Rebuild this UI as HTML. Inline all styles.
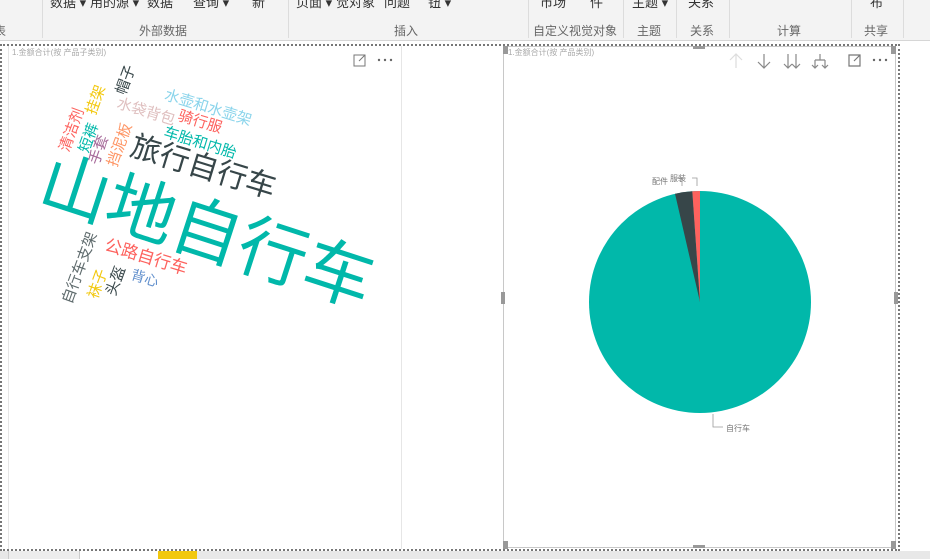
<!DOCTYPE html>
<html><head><meta charset="utf-8"><style>
*{margin:0;padding:0;box-sizing:border-box}
body{width:930px;height:559px;overflow:hidden;background:#fff;position:relative;font-family:"Liberation Sans","Noto Sans CJK SC",sans-serif}
.rib{position:absolute;left:0;top:0;width:930px;height:41px;background:#f3f3f3;border-bottom:1px solid #d6d6d6}
.t{position:absolute;top:-8px;font-size:13px;color:#333;white-space:nowrap}
.g{position:absolute;top:22px;font-size:12px;color:#666;white-space:nowrap}
.sep{position:absolute;top:0;width:1px;height:38px;background:#dcdcdc}
.w{position:absolute;white-space:nowrap;transform:translate(-50%,-50%);line-height:1}
.ttl{position:absolute;font-size:8px;color:#aaa;white-space:nowrap}
</style></head><body>
<div class="rib">
<span class="t" style="left:50px">数据 ▾</span><span class="t" style="left:90px">用的源 ▾</span><span class="t" style="left:147px">数据</span><span class="t" style="left:193px">查询 ▾</span><span class="t" style="left:252px">新</span>
<span class="t" style="left:296px">页面 ▾</span><span class="t" style="left:336px">觉对象</span><span class="t" style="left:384px">问题</span><span class="t" style="left:428px">钮 ▾</span>
<span class="t" style="left:540px">市场</span><span class="t" style="left:590px">件</span><span class="t" style="left:632px">主题 ▾</span><span class="t" style="left:688px">关系</span><span class="t" style="left:870px">布</span>
<span class="g" style="left:-6px">表</span>
<span class="g" style="left:139px">外部数据</span><span class="g" style="left:394px">插入</span><span class="g" style="left:533px">自定义视觉对象</span><span class="g" style="left:637px">主题</span><span class="g" style="left:690px">关系</span><span class="g" style="left:777px">计算</span><span class="g" style="left:864px">共享</span>
<div class="sep" style="left:42px"></div><div class="sep" style="left:288px"></div><div class="sep" style="left:528px"></div><div class="sep" style="left:623px"></div><div class="sep" style="left:676px"></div><div class="sep" style="left:729px"></div><div class="sep" style="left:851px"></div><div class="sep" style="left:903px"></div>
</div>
<div style="position:absolute;left:0;top:44px;width:900px;height:507px;border:2px dotted #777"></div>
<div style="position:absolute;left:401px;top:46px;width:1px;height:503px;background:#e6e6e6"></div>
<div style="position:absolute;left:8px;top:46px;width:1px;height:503px;background:#e6e6e6"></div>
<div style="position:absolute;left:503px;top:46px;width:393px;height:502px;border:1px solid #c8c8c8"></div>
<div style="position:absolute;left:503px;top:46px;width:5px;height:8px;background:#999"></div>
<div style="position:absolute;left:693px;top:46px;width:12px;height:3px;background:#999"></div>
<div style="position:absolute;left:891px;top:46px;width:5px;height:8px;background:#999"></div>
<div style="position:absolute;left:503px;top:541px;width:5px;height:8px;background:#999"></div>
<div style="position:absolute;left:693px;top:545px;width:12px;height:3px;background:#999"></div>
<div style="position:absolute;left:891px;top:541px;width:5px;height:8px;background:#999"></div>
<div style="position:absolute;left:501px;top:292px;width:4px;height:12px;background:#999"></div>
<div style="position:absolute;left:894px;top:292px;width:4px;height:12px;background:#999"></div>
<div style="position:absolute;left:0;top:551px;width:930px;height:8px;background:#e8e8e8"></div>
<div style="position:absolute;left:8px;top:551px;width:72px;height:8px;background:#ededed;border-left:1px solid #ccc;border-right:1px solid #ccc"></div>
<div style="position:absolute;left:80px;top:551px;width:78px;height:8px;background:#fff"></div>
<div style="position:absolute;left:158px;top:551px;width:39px;height:8px;background:#f2c80f"></div>
<span class="ttl" style="left:12px;top:47px">1.金额合计(按 产品子类别)</span>
<span class="ttl" style="left:508px;top:47px">1.金额合计(按 产品类别)</span>
<svg style="position:absolute;left:350px;top:52px" width="50" height="16"><g stroke="#777" fill="none" stroke-width="1"><path d="M4 3h11v11H4z M9 9l6-6 M11 3h4v4"/></g><g fill="#666"><circle cx="29" cy="8" r="1.2"/><circle cx="35" cy="8" r="1.2"/><circle cx="41" cy="8" r="1.2"/></g></svg>
<svg style="position:absolute;left:725px;top:52px" width="170" height="18"><g fill="none" stroke-width="1.2"><path d="M11 2v14 M5 8l6-6 6 6" stroke="#ddd"/><path d="M39 2v14 M33 10l6 6 6-6" stroke="#888"/><path d="M63 2v14 M71 2v14 M59 12l4 4 4-4 M67 12l4 4 4-4" stroke="#888"/><path d="M95 2v6 M90 8h10 M90 8v8 M100 8v8 M87 13l3 3 3-3 M97 13l3 3 3-3" stroke="#888"/><path d="M124 3h11v11h-11z M129 9l6-6 M131 3h4v4" stroke="#777"/></g><g fill="#666"><circle cx="149" cy="8" r="1.2"/><circle cx="155" cy="8" r="1.2"/><circle cx="161" cy="8" r="1.2"/></g></svg>
<svg style="position:absolute;left:0;top:0" width="930" height="559">
<circle cx="700" cy="302" r="111" fill="#01b8aa"/>
<path d="M700 302 L675 193.8 A111 111 0 0 1 692.3 191.3 Z" fill="#374649"/>
<path d="M700 302 L692.3 191.3 A111 111 0 0 1 700 191 Z" fill="#fd625e"/>
<path d="M682 186 v-8 h-6 M697 186 v-8 h-5" stroke="#999" fill="none" stroke-width="0.8"/>
<path d="M713 414 v13 h10" stroke="#999" fill="none" stroke-width="0.8"/>
<text x="652" y="184" font-size="8" fill="#777" font-family="Liberation Sans,Noto Sans CJK SC,sans-serif">配件</text>
<text x="670" y="181" font-size="8" fill="#777" font-family="Liberation Sans,Noto Sans CJK SC,sans-serif">服装</text>
<text x="726" y="431" font-size="8" fill="#777" font-family="Liberation Sans,Noto Sans CJK SC,sans-serif">自行车</text>
</svg>
<span class="w" style="left:207px;top:232px;font-size:69px;color:#01b8aa;transform:translate(-50%,-50%) rotate(18deg)">山地自行车</span>
<span class="w" style="left:203px;top:168px;font-size:30px;color:#374649;transform:translate(-50%,-50%) rotate(17deg)">旅行自行车</span>
<span class="w" style="left:146px;top:257px;font-size:17px;color:#fd625e;transform:translate(-50%,-50%) rotate(17deg)">公路自行车</span>
<span class="w" style="left:200px;top:143px;font-size:15px;color:#01b8aa;transform:translate(-50%,-50%) rotate(17deg)">车胎和内胎</span>
<span class="w" style="left:208px;top:108px;font-size:15px;color:#8ad4eb;transform:translate(-50%,-50%) rotate(17deg)">水壶和水壶架</span>
<span class="w" style="left:146px;top:112px;font-size:15px;color:#dfbfbf;transform:translate(-50%,-50%) rotate(17deg)">水袋背包</span>
<span class="w" style="left:200px;top:122px;font-size:15px;color:#fd625e;transform:translate(-50%,-50%) rotate(17deg)">骑行服</span>
<span class="w" style="left:145px;top:278px;font-size:14px;color:#5f8ecc;transform:translate(-50%,-50%) rotate(17deg)">背心</span>
<span class="w" style="left:126px;top:80px;font-size:15px;color:#374649;transform:translate(-50%,-50%) rotate(-70deg)">帽子</span>
<span class="w" style="left:96px;top:100px;font-size:15px;color:#f2c80f;transform:translate(-50%,-50%) rotate(-70deg)">挂架</span>
<span class="w" style="left:72px;top:130px;font-size:15px;color:#fd625e;transform:translate(-50%,-50%) rotate(-70deg)">清洁剂</span>
<span class="w" style="left:89px;top:138px;font-size:15px;color:#01b8aa;transform:translate(-50%,-50%) rotate(-70deg)">短裤</span>
<span class="w" style="left:99px;top:150px;font-size:15px;color:#a66999;transform:translate(-50%,-50%) rotate(-70deg)">手套</span>
<span class="w" style="left:120px;top:145px;font-size:15px;color:#fe9666;transform:translate(-50%,-50%) rotate(-70deg)">挡泥板</span>
<span class="w" style="left:80px;top:268px;font-size:15px;color:#5f6b6d;transform:translate(-50%,-50%) rotate(-70deg)">自行车支架</span>
<span class="w" style="left:98px;top:284px;font-size:15px;color:#f2c80f;transform:translate(-50%,-50%) rotate(-70deg)">袜子</span>
<span class="w" style="left:116px;top:281px;font-size:15px;color:#374649;transform:translate(-50%,-50%) rotate(-70deg)">头盔</span>
</body></html>
